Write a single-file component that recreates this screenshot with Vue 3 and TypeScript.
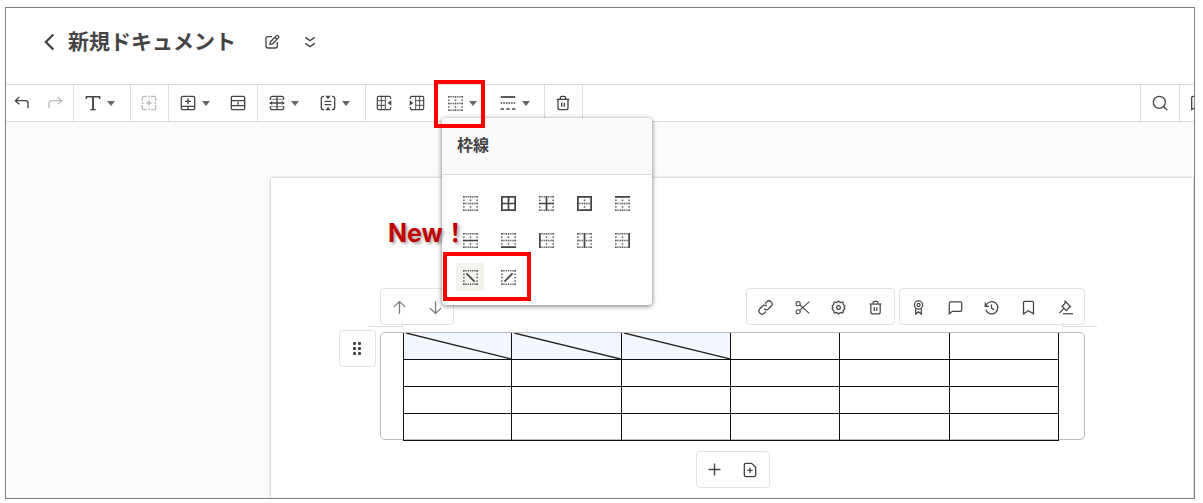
<script setup lang="ts">
import { h, ref, type FunctionalComponent } from 'vue'

type Stroke = string | { d: string; fill?: boolean; dash?: string; w?: number }

const glyphs: Record<string, Stroke[]> = {
  back: [{ d: 'M16 3L7 12l9 9', w: 2.8 }],
  edit: ['M12 4H6a3 3 0 0 0-3 3v11a3 3 0 0 0 3 3h11a3 3 0 0 0 3-3v-6', 'M9 15.5l.8-4L18.5 2.8a2 2 0 0 1 3 3L13 14.7z', 'M16.5 5l2.8 2.8'],
  expand: ['M5 5l7 5 7-5', 'M5 14l7 5 7-5'],
  undo: ['M8 3L2 8.5 8 14', 'M2 8.5h15a4 4 0 0 1 4 4V20'],
  redo: ['M16 3l6 5.5L16 14', 'M22 8.5H7a4 4 0 0 0-4 4V20'],
  text: [{ d: 'M2 6V2.5h20V6', w: 2.2 }, { d: 'M12 3v19', w: 2.8 }, 'M8 22h8'],
  cellPlus: [
    { d: 'M2 9V4a2 2 0 0 1 2-2h5M15 2h5a2 2 0 0 1 2 2v5M22 15v5a2 2 0 0 1-2 2h-5M9 22H4a2 2 0 0 1-2-2v-5' },
    'M12 8v8M8 12h8M12 1v3M12 20v3M1 12h3M20 12h3',
  ],
  rowInsert: ['M4 2h16a2 2 0 0 1 2 2v16a2 2 0 0 1-2 2H4a2 2 0 0 1-2-2V4a2 2 0 0 1 2-2z', 'M2 17h20M12 17V22', 'M12 5v9M7.5 9.5h9'],
  rowMerge: ['M4 2h16a2 2 0 0 1 2 2v16a2 2 0 0 1-2 2H4a2 2 0 0 1-2-2V4a2 2 0 0 1 2-2z', 'M2 8.5h20M2 16h20M12 10v4.5'],
  splitHorizontal: [
    { d: 'M2 7V5a3 3 0 0 1 3-3h14a3 3 0 0 1 3 3v2M2 17v2a3 3 0 0 0 3 3h14a3 3 0 0 0 3-3v-2', w: 1.8 },
    { d: 'M2 6.5h20M2 17.5h20', w: 1 },
    'M12 2v20M5 12h14',
    { d: 'M0 12l5-3v6zM24 12l-5-3v6z', fill: true },
  ],
  splitVertical: [
    'M6 2H5a3 3 0 0 0-3 3v14a3 3 0 0 0 3 3h1M18 2h1a3 3 0 0 1 3 3v14a3 3 0 0 1-3 3h-1',
    'M7 9.5h10M7 14.5h10',
    { d: 'M12 6.5L8 1h8zM12 17.5L8 23h8z', fill: true },
  ],
  columnRight: [{ d: 'M22 6V4a2 2 0 0 0-2-2H4a2 2 0 0 0-2 2v16a2 2 0 0 0 2 2h16a2 2 0 0 0 2-2v-2', w: 1.8 }, { d: 'M8 2v20M14 2v20M2 8.5h12M2 15.5h12', w: 1.4 }, { d: 'M17.5 12L23 8v8z', fill: true }],
  columnLeft: [{ d: 'M2 6V4a2 2 0 0 1 2-2h16a2 2 0 0 1 2 2v16a2 2 0 0 1-2 2H4a2 2 0 0 1-2-2v-2', w: 1.8 }, { d: 'M16 2v20M10 2v20M22 8.5H10M22 15.5H10', w: 1.4 }, { d: 'M6.5 12L1 8v8z', fill: true }],
  lineStyle: [{ d: 'M1 3h22', w: 2.6 }, { d: 'M1 12h22', dash: '2.4 1.5', w: 2.4 }, { d: 'M1 21h22', dash: '5 3.5', w: 2.4 }],
  trash: ['M2.5 6.5h19', 'M8 6V4.5A2.5 2.5 0 0 1 10.5 2h3A2.5 2.5 0 0 1 16 4.5V6', 'M4.5 7v12a3 3 0 0 0 3 3h9a3 3 0 0 0 3-3V7', 'M10 11.5v6M14 11.5v6'],
  search: ['M11 2a9 9 0 1 0 0 18a9 9 0 1 0 0-18z', 'M17.5 17.5L23 23'],
  bookmark: ['M6 2h12a2 2 0 0 1 2 2v18l-8-5-8 5V4a2 2 0 0 1 2-2z'],
  up: ['M12 22V3M3 11l9-8.5 9 8.5'],
  down: ['M12 2v19M3 13l9 8.5 9-8.5'],
  link: ['M10 14a5 5 0 0 0 7 0l4-4a4.9 4.9 0 0 0-7-7l-2.5 2.5', 'M14 10a5 5 0 0 0-7 0l-4 4a4.9 4.9 0 0 0 7 7l2.5-2.5'],
  cut: [{ d: 'M5 2.5a3.3 3.3 0 1 0 0 6.6a3.3 3.3 0 1 0 0-6.6zM5 15.5a3.3 3.3 0 1 0 0 6.6a3.3 3.3 0 1 0 0-6.6z', w: 1.7 }, { d: 'M23 2.5L7.5 16.5M7.5 8L23 21.5', w: 1.7 }],
  gear: ['M12 1.8l2.9 2.3 3.9-.9.9 3.9 2.5 2.9-1.4 2 1.4 2-2.5 2.9-.9 3.9-3.9-.9L12 22.2l-2.9-2.3-3.9.9-.9-3.9L1.8 14l1.4-2-1.4-2 2.5-2.9.9-3.9 3.9.9z', 'M12 9a3 3 0 1 0 0 6a3 3 0 1 0 0-6z'],
  award: ['M12 1.5a6.5 6.5 0 1 0 0 13a6.5 6.5 0 1 0 0-13z', 'M12 5.5a2.5 2.5 0 1 0 0 5a2.5 2.5 0 1 0 0-5z', 'M7.5 13.5V22.5L12 19l4.5 3.5v-9'],
  comment: ['M4 3h16a2 2 0 0 1 2 2v11a2 2 0 0 1-2 2H7l-5 4V5a2 2 0 0 1 2-2z'],
  history: ['M2 4v6h6', 'M3 9.5A9.8 9.8 0 1 1 3 15.5', 'M12 7v6l4 2.5'],
  gavel: ['M8 22h16', 'M11.5 2l8.5 8.5-2.8 1.8-3.7 4.7-7-7 4.3-4z', 'M10 13l-8 8'],
  plus: [{ d: 'M12 1v22M1 12h22', w: 2.6 }],
  filePlus: ['M14.5 2H6a2.5 2.5 0 0 0-2.5 2.5v15A2.5 2.5 0 0 0 6 22h12a2.5 2.5 0 0 0 2.5-2.5V8z', 'M12 8.5v8M8 12.5h8'],
}

const Icon: FunctionalComponent<{ name: string; size?: number }> = (props) =>
  h(
    'svg',
    { viewBox: '0 0 24 24', width: props.size ?? 16, height: props.size ?? 16, fill: 'none', stroke: 'currentColor', 'stroke-width': 2, 'aria-hidden': 'true' },
    glyphs[props.name].map((s) => {
      const g = typeof s === 'string' ? { d: s } : s
      return h('path', { d: g.d, fill: g.fill ? 'currentColor' : undefined, stroke: g.fill ? 'none' : undefined, 'stroke-width': g.w, 'stroke-dasharray': g.dash })
    }),
  )
Icon.props = ['name', 'size']

const edges: Record<string, string> = {
  top: 'M0 1.5H26',
  right: 'M24.5 0V26',
  bottom: 'M0 24.5H26',
  left: 'M1.5 0V26',
  middle: 'M0 13H26',
  center: 'M13 0V26',
  down: 'M6 6L20 20',
  up: 'M6 20L20 6',
}

const BorderIcon: FunctionalComponent<{ solid: string[] }> = (props) => {
  const diagonal = props.solid.includes('down') || props.solid.includes('up')
  const base = ['top', 'right', 'bottom', 'left', ...(diagonal ? [] : ['middle', 'center'])]
  const dotted = base.filter((e) => !props.solid.includes(e))
  const upright = ['left', 'right', 'center']
  return h('svg', { viewBox: '0 0 26 26', width: 15, height: 15, fill: 'none', stroke: 'currentColor', 'aria-hidden': 'true' }, [
    ...dotted.map((e) => h('path', { d: edges[e], stroke: '#5c5c5c', 'stroke-width': 2.6, 'stroke-dasharray': upright.includes(e) ? '2.6 3.25' : '2.3 1.65' })),
    ...props.solid.map((e) => h('path', { d: edges[e], 'stroke-width': 3 })),
  ])
}
BorderIcon.props = ['solid']

interface Tool { icon: string; label: string; menu?: boolean; off?: boolean; gap?: boolean }
const groups: { size: string; tools: Tool[] }[] = [
  { size: 'tight', tools: [{ icon: 'undo', label: '元に戻す' }, { icon: 'redo', label: 'やり直す', off: true }] },
  { size: 'wide', tools: [{ icon: 'text', label: 'テキスト', menu: true }] },
  { size: '', tools: [{ icon: 'cellPlus', label: 'セルの結合', off: true }] },
  { size: '', tools: [{ icon: 'rowInsert', label: '行の挿入', menu: true }, { icon: 'rowMerge', label: '行の高さ' }] },
  { size: 'double', tools: [{ icon: 'splitHorizontal', label: '横の配置', menu: true }, { icon: 'splitVertical', label: '縦の配置', menu: true }] },
  {
    size: '',
    tools: [
      { icon: 'columnRight', label: '右に列を追加' },
      { icon: 'columnLeft', label: '左に列を追加' },
      { icon: 'border', label: '枠線', menu: true, gap: true },
      { icon: 'lineStyle', label: '線の種類', menu: true },
    ],
  },
  { size: '', tools: [{ icon: 'trash', label: '削除' }] },
]

const borders = [
  { label: '枠線なし', solid: [] as string[] },
  { label: 'すべて', solid: ['top', 'right', 'bottom', 'left', 'middle', 'center'] },
  { label: '内側', solid: ['middle', 'center'] },
  { label: '外側', solid: ['top', 'right', 'bottom', 'left'] },
  { label: '上', solid: ['top'] },
  { label: '横中央', solid: ['middle'] },
  { label: '下', solid: ['bottom'] },
  { label: '左', solid: ['left'] },
  { label: '縦中央', solid: ['center'] },
  { label: '右', solid: ['right'] },
  { label: '右下がり斜線', solid: ['down'] },
  { label: '右上がり斜線', solid: ['up'] },
]
const active = ref(10)

const moveTools = [['up', '上へ移動'], ['down', '下へ移動']]
const blockTools = [['link', 'リンク'], ['cut', '切り取り'], ['gear', '設定'], ['trash', '削除']]
const reviewTools = [['award', '承認'], ['comment', 'コメント'], ['history', '履歴'], ['bookmark', 'ブックマーク'], ['gavel', '決定']]
</script>

<template>
  <div class="window">
    <header class="head">
      <button class="back" aria-label="戻る"><Icon name="back" :size="20" /></button>
      <h1>新規ドキュメント</h1>
      <button class="edit" aria-label="名前を編集"><Icon name="edit" /></button>
      <button class="more" aria-label="展開"><Icon name="expand" /></button>
    </header>

    <nav class="toolbar" aria-label="書式">
      <div v-for="(g, i) in groups" :key="i" class="group" :class="g.size">
        <button
          v-for="t in g.tools"
          :key="t.icon"
          class="tool"
          :class="{ menu: t.menu, gap: t.gap }"
          :disabled="t.off"
          :aria-label="t.label"
        >
          <BorderIcon v-if="t.icon === 'border'" :solid="[]" />
          <Icon v-else :name="t.icon" />
          <span v-if="t.menu" class="caret"></span>
        </button>
      </div>
      <div class="tail">
        <button class="tool" aria-label="検索"><Icon name="search" /></button>
        <button class="tool clipped" aria-label="しおり"><Icon name="bookmark" /></button>
      </div>
    </nav>

    <main class="canvas">
      <article class="page">
        <div class="bars">
          <div class="bar move">
            <button v-for="[icon, label] in moveTools" :key="icon" :aria-label="label"><Icon :name="icon" :size="15" /></button>
          </div>
          <div class="bar four">
            <button v-for="[icon, label] in blockTools" :key="icon" :aria-label="label"><Icon :name="icon" :size="15" /></button>
          </div>
          <div class="bar five">
            <button v-for="[icon, label] in reviewTools" :key="icon" :aria-label="label"><Icon :name="icon" :size="15" /></button>
          </div>
        </div>

        <section class="block">
          <span class="guide start"></span>
          <span class="guide end"></span>
          <button class="handle" aria-label="ブロックを移動"><i v-for="n in 6" :key="n"></i></button>
          <table aria-label="表">
            <tbody>
              <tr v-for="r in 4" :key="r">
                <td v-for="c in 6" :key="c" :class="{ picked: r === 1 && c < 4 }">
                  <svg v-if="r === 1 && c < 4" class="slash" viewBox="0 0 100 100" preserveAspectRatio="none" aria-hidden="true">
                    <path d="M2 0L100 100" vector-effect="non-scaling-stroke" />
                  </svg>
                </td>
              </tr>
            </tbody>
          </table>
        </section>

        <div class="bar add">
          <button aria-label="追加"><Icon name="plus" :size="13" /></button>
          <button aria-label="ページを追加"><Icon name="filePlus" /></button>
        </div>
      </article>
    </main>

    <div class="popup" role="dialog" aria-labelledby="popup-title">
      <h2 id="popup-title">枠線</h2>
      <div class="choices">
        <button v-for="(b, i) in borders" :key="b.label" :class="{ on: i === active }" :aria-label="b.label" @click="active = i">
          <BorderIcon :solid="b.solid" />
        </button>
      </div>
    </div>

    <span class="mark tool-mark"></span>
    <span class="mark choice-mark"></span>
    <strong class="new">New！</strong>
  </div>
</template>

<style>
body {
  background: #fff;
}
</style>

<style scoped>
* {
  box-sizing: border-box;
}
.window {
  position: relative;
  margin: 7px 8px 4px 5px;
  border: 1px solid #7f7f7f;
  background: #fff;
  color: #444;
  font-family: "Noto Sans CJK JP", "Noto Sans", sans-serif;
}
button {
  display: flex;
  align-items: center;
  justify-content: center;
  padding: 0;
  border: 0;
  background: none;
  color: inherit;
  cursor: pointer;
}
svg {
  flex: none;
  display: block;
}
.head {
  display: flex;
  align-items: center;
  height: 76px;
  padding: 0 34px 8px;
}
h1 {
  margin: 0 0 0 8px;
  padding-bottom: 4px;
  font-size: 21px;
  line-height: 30px;
  font-weight: 700;
  white-space: nowrap;
}
.edit {
  margin-left: 28px;
}
.more {
  margin-left: 22px;
}
.toolbar {
  display: flex;
  height: 38px;
  border-top: 1px solid #ddd;
  border-bottom: 1px solid #ddd;
  overflow: hidden;
}
.group {
  flex: none;
  display: flex;
  padding: 0 2px;
  border-right: 1px solid #ddd;
}
.tight {
  padding: 0 1px 0 0;
}
.wide {
  width: 57px;
}
.double {
  width: 108px;
}
.tool {
  flex: none;
  width: 33px;
  padding-right: 1px;
}
.tool:disabled {
  color: #bbb;
}
.menu {
  width: 51px;
  gap: 6px;
  padding-right: 4px;
}
.gap {
  margin-left: 5px;
  margin-right: 1px;
}
.caret {
  border: 4px solid transparent;
  border-top: 5px solid #666;
  border-bottom: 0;
}
.tail {
  display: flex;
  margin-left: auto;
}
.tail .tool {
  width: 39px;
  border-left: 1px solid #ddd;
}
.tail .clipped {
  justify-content: flex-start;
  width: 15px;
  padding-left: 9px;
  overflow: hidden;
}
.canvas {
  padding: 56px 1px 0 265px;
  background: #fcfbf9;
}
.page {
  padding: 110px 108px 10px 109px;
  background: #fff;
  box-shadow: 0 0 3px rgba(0, 0, 0, 0.3);
  clip-path: inset(-4px -1px 0 -4px);
}
.bars {
  display: flex;
  gap: 4px;
}
.bar {
  display: flex;
  height: 37px;
  border: 1px solid #e2e2e2;
  border-radius: 4px;
  background: #fff;
}
.bar button {
  flex: 1;
  padding-top: 2px;
}
.move {
  width: 74px;
  margin-right: auto;
  color: #777;
}
.four {
  width: 149px;
}
.five {
  width: 186px;
}
.block {
  position: relative;
  margin-top: 7px;
  padding: 0 25px 0 22px;
  border: 1px solid #bbb;
  border-radius: 5px;
}
.guide {
  position: absolute;
  top: -10px;
  width: 35px;
  height: 4px;
  border-bottom: 1px solid #ddd;
}
.start {
  left: -13px;
  border-right: 1px solid #ddd;
}
.end {
  right: -13px;
  border-left: 1px solid #ddd;
}
.handle {
  position: absolute;
  top: -3px;
  left: -42px;
  display: grid;
  grid-template-columns: 3px 3px;
  align-content: center;
  gap: 2px;
  width: 37px;
  height: 37px;
  padding: 0 1px 1px 0;
  border: 1px solid #e2e2e2;
  border-radius: 4px;
}
.handle i {
  width: 3px;
  height: 3px;
  border-radius: 1px;
  background: #444;
}
table {
  width: 100%;
  margin-bottom: -2px;
  border-spacing: 0;
  table-layout: fixed;
}
td {
  position: relative;
  height: 27px;
  padding: 0;
  border: solid #111;
  border-width: 0 1px 1px 0;
}
td:first-child {
  border-left-width: 1px;
}
.picked {
  background: #f2f8fd;
}
.slash {
  position: absolute;
  inset: 0;
  width: 100%;
  height: 100%;
  stroke: #222;
  stroke-width: 1.3;
}
.add {
  width: 74px;
  margin: 11px auto 0;
}
.add button {
  padding: 0 1px 0 0;
}
.popup {
  position: absolute;
  top: 110px;
  left: 436px;
  width: 210px;
  border-radius: 4px;
  background: #fff;
  box-shadow: 0 1px 5px rgba(0, 0, 0, 0.55);
  overflow: hidden;
}
h2 {
  margin: 0;
  padding: 14px 15px 18px;
  border-bottom: 1px solid #ddd;
  background: #fafafa;
  font-size: 16px;
  line-height: 24px;
  font-weight: 700;
}
.choices {
  display: grid;
  grid-template-columns: repeat(5, 28px);
  gap: 9px 10px;
  padding: 14px;
}
.choices button {
  height: 28px;
}
.on {
  background: #f5f3ee;
}
.mark {
  position: absolute;
  border: 4px solid #f00;
  pointer-events: none;
}
.tool-mark {
  top: 72px;
  left: 428px;
  width: 51px;
  height: 48px;
}
.choice-mark {
  top: 244px;
  left: 437px;
  width: 88px;
  height: 49px;
}
.new {
  position: absolute;
  top: 206px;
  left: 382px;
  color: #c00000;
  font-family: Inter, "Noto Sans CJK JP", sans-serif;
  font-size: 25px;
  line-height: 38px;
  text-shadow: 2px 2px 3px rgba(0, 0, 0, 0.35);
}
</style>
